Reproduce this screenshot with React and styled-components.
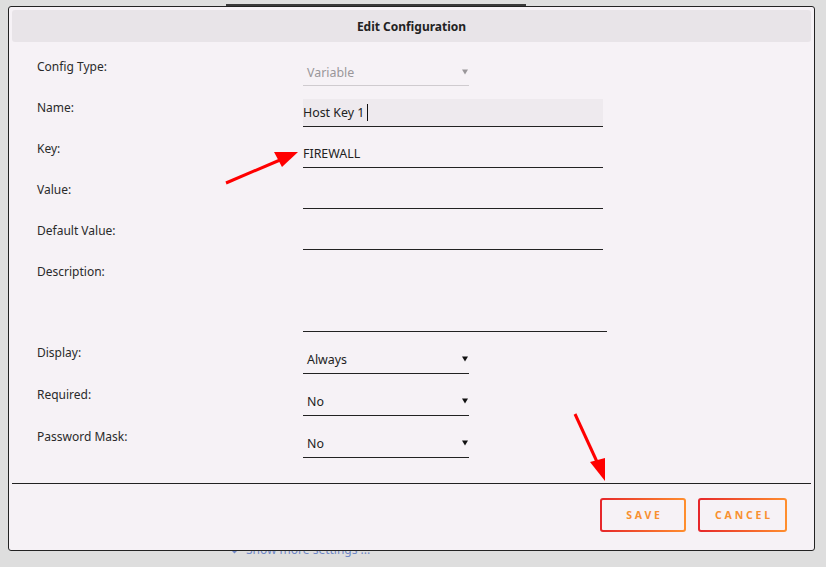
import React from 'react';
import styled, { createGlobalStyle } from 'styled-components';

const Global = createGlobalStyle`
  html, body { margin: 0; padding: 0; }
  body {
    background: #dedede;
    font-family: "Noto Sans", "DejaVu Sans", sans-serif;
    width: 826px;
    height: 567px;
    overflow: hidden;
  }
`;

const Page = styled.div`
  position: relative;
  width: 826px;
  height: 567px;
  background: #dedede;
`;

const BackTab = styled.div`
  position: absolute;
  left: 226px;
  top: 4px;
  width: 300px;
  height: 2px;
  background: #3a3a3a;
`;

const MoreLink = styled.div`
  position: absolute;
  left: 229px;
  top: 541px;
  display: flex;
  align-items: center;
  gap: 6px;
  color: #6f87c6;
  font-size: 12px;
`;

const Dialog = styled.div`
  position: absolute;
  left: 8px;
  top: 6px;
  width: 807px;
  height: 545px;
  box-sizing: border-box;
  border: 1px solid #222;
  border-radius: 3px;
  background: #f6f2f6;
  padding: 3px;
  display: flex;
  flex-direction: column;
`;

const Header = styled.div`
  height: 32px;
  flex: none;
  background: #e8e4e8;
  border-radius: 3px;
  display: flex;
  align-items: center;
  justify-content: center;
  font-size: 12px;
  font-weight: 700;
  color: #222;
`;

const Body = styled.div`
  padding: 16px 0 0 25px;
  height: 441px;
  flex: none;
  box-sizing: border-box;
`;

const Row = styled.div`
  display: grid;
  grid-template-columns: 266px auto;
  height: ${p => p.h || 41}px;
`;

const Label = styled.div`
  font-size: 12px;
  color: #2a2a2a;
  line-height: 16px;
  padding-top: 1px;
`;

const Field = styled.div`
  width: ${p => p.w || 300}px;
  height: ${p => p.h || 28}px;
  box-sizing: border-box;
  border-bottom: 1px solid ${p => (p.muted ? '#cfcbcf' : '#222')};
  background: ${p => (p.focused ? '#eeeaee' : 'transparent')};
  display: flex;
  align-items: ${p => (p.top ? 'flex-start' : 'center')};
  font-size: 12.4px;
  color: #222;
`;

const SelectField = styled(Field)`
  padding: 1px 1px 0 4px;
  justify-content: space-between;
  color: ${p => (p.muted ? '#9a979a' : '#222')};
`;

const Caret = styled.span`
  display: inline-block;
  width: 1px;
  height: 17px;
  background: #111;
  margin-left: 3px;
`;

const Arrow = ({ color }) => (
  <svg width="6" height="6" viewBox="0 0 6 6">
    <path d="M0 0.5 L6 0.5 L3 5.5 Z" fill={color} />
  </svg>
);

const Separator = styled.div`
  height: 1px;
  flex: none;
  background: #222;
`;

const Footer = styled.div`
  flex: 1;
  display: flex;
  justify-content: flex-end;
  align-items: flex-start;
  gap: 12px;
  padding: 14px 24px 0 0;
`;

const Button = styled.button`
  width: ${p => p.w}px;
  height: 34px;
  border: 2px solid transparent;
  border-radius: 3px;
  background:
    linear-gradient(#f6f2f6, #f6f2f6) padding-box,
    linear-gradient(90deg, #e6262b, #ff8f2e) border-box;
  color: #f8902f;
  font-family: "Noto Sans", sans-serif;
  font-size: 10.5px;
  font-weight: 700;
  letter-spacing: 2.8px;
  padding: 0 0 0 3px;
  cursor: pointer;
`;

const Annotations = styled.svg`
  position: absolute;
  left: 0;
  top: 0;
  pointer-events: none;
`;

const fields = [
  { label: 'Key:', value: 'FIREWALL' },
  { label: 'Value:', value: '' },
  { label: 'Default Value:', value: '' },
];

const selects = [
  { label: 'Display:', value: 'Always' },
  { label: 'Required:', value: 'No' },
  { label: 'Password Mask:', value: 'No' },
];

export default function App() {
  return (
    <Page>
      <Global />
      <BackTab />
      <MoreLink>
        <svg width="11" height="8" viewBox="0 0 11 8">
          <path d="M1 1.5 L5.5 6 L10 1.5" stroke="#6f87c6" strokeWidth="2.2" fill="none" />
        </svg>
        Show more settings ...
      </MoreLink>
      <Dialog>
        <Header>Edit Configuration</Header>
        <Body>
          <Row>
            <Label>Config Type:</Label>
            <SelectField w={166} muted>
              <span>Variable</span>
              <Arrow color="#9a979a" />
            </SelectField>
          </Row>
          <Row>
            <Label>Name:</Label>
            <Field focused>
              Host Key 1<Caret />
            </Field>
          </Row>
          {fields.map(f => (
            <Row key={f.label}>
              <Label>{f.label}</Label>
              <Field>{f.value}</Field>
            </Row>
          ))}
          <Row h={81}>
            <Label>Description:</Label>
            <Field w={304} h={69} top />
          </Row>
          {selects.map(s => (
            <Row key={s.label} h={42}>
              <Label>{s.label}</Label>
              <SelectField w={166} h={30}>
                <span>{s.value}</span>
                <Arrow color="#111" />
              </SelectField>
            </Row>
          ))}
        </Body>
        <Separator />
        <Footer>
          <Button w={86}>SAVE</Button>
          <Button w={89}>CANCEL</Button>
        </Footer>
      </Dialog>
      <Annotations width="826" height="567">
        <line x1="226" y1="183" x2="280" y2="160" stroke="#ff0000" strokeWidth="3" />
        <polygon points="298,152 274,152 282,167" fill="#ff0000" />
        <line x1="575" y1="414" x2="598" y2="464" stroke="#ff0000" strokeWidth="3" />
        <polygon points="605,481 590,462 605,458" fill="#ff0000" />
      </Annotations>
    </Page>
  );
}
